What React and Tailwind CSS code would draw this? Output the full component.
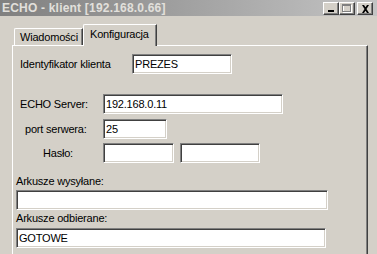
import React from 'react'

const sunken =
    'border border-t-[#808080] border-l-[#808080] border-b-white border-r-white shadow-[inset_1px_1px_0_#404040,inset_-1px_-1px_0_#d4d0c8] bg-white'

const Field = ({ w, h = 'h-[20px]', value = '' }) => (
    <div className={`${sunken} ${w} ${h} flex items-center pl-[2px] text-[11px] tracking-[-0.2px] text-black leading-none`}>
        {value}
    </div>
)

const CapButton = ({ children, className = '' }) => (
    <div className={`w-[16px] h-[13px] bg-[#d4d0c8] border border-t-white border-l-white border-b-[#404040] border-r-[#404040] shadow-[inset_-1px_-1px_0_#808080] flex items-center justify-center ${className}`}>
        {children}
    </div>
)

const App = () => {
    return (
        <div className="w-[377px] h-[254px] bg-[#d4d0c8] overflow-hidden flex flex-col font-['Liberation_Sans',Arial,sans-serif] text-black">
            {/* title bar */}
            <div className="h-[16px] flex items-start bg-gradient-to-r from-[#808080] to-[#c4c4c4]">
                <div className="pl-[2px] h-[16px] flex items-center text-[12px] font-bold tracking-[0.2px] text-[#e2e0dc] leading-none">
                    ECHO - klient [192.168.0.66]
                </div>
                <div className="ml-auto mt-[2px] mr-[4px] flex">
                    <CapButton>
                        <svg width="8" height="9" viewBox="0 0 8 9">
                            <rect x="1" y="6" width="6" height="2" fill="#000" />
                        </svg>
                    </CapButton>
                    <CapButton>
                        <svg width="10" height="9" viewBox="0 0 10 9">
                            <rect x="1.5" y="1.5" width="8" height="7" fill="none" stroke="#ffffff" />
                            <rect x="0.5" y="0.5" width="8" height="7" fill="none" stroke="#808080" />
                            <rect x="0" y="1" width="9" height="1" fill="#808080" />
                        </svg>
                    </CapButton>
                    <CapButton className="ml-[2px]">
                        <svg width="9" height="8" viewBox="0 0 9 8">
                            <path d="M1 0h2l1.5 2.2L6 0h2L5.5 4 8 8H6L4.5 5.8 3 8H1l2.5-4z" fill="#000" />
                        </svg>
                    </CapButton>
                </div>
            </div>

            {/* tabs */}
            <div className="mt-[8px] h-[21px] pl-[14px] flex items-end">
                <div className="w-[69px] h-[17px] border-t border-l border-white border-r border-r-[#404040] shadow-[inset_-1px_0_0_#808080] rounded-tl-[2px] pl-[5px] flex items-center text-[11px] tracking-[-0.2px] leading-none">
                    Wiadomości
                </div>
                <div className="relative z-10 w-[74px] h-[22px] -mb-px bg-[#d4d0c8] border-t border-l border-white border-r border-r-[#404040] shadow-[inset_-1px_0_0_#808080] rounded-tl-[2px] pl-[6px] pb-[3px] flex items-center text-[11px] tracking-[-0.2px] leading-none">
                    Konfiguracja
                </div>
            </div>

            {/* panel */}
            <div className="ml-[12px] w-[356px] flex-1 border-t border-l border-white border-r border-r-[#404040] shadow-[inset_-1px_0_0_#808080] flex flex-col text-[11px] tracking-[-0.2px] leading-[13px]">
                <div className="mt-[8px] flex items-center h-[20px]">
                    <div className="w-[119px] pl-[7px]">Identyfikator klienta</div>
                    <Field w="w-[100px]" value="PREZES" />
                </div>

                <div className="mt-[20px] flex items-center h-[20px]">
                    <div className="w-[90px] pl-[7px]">ECHO Server:</div>
                    <Field w="w-[180px]" value="192.168.0.11" />
                </div>

                <div className="mt-[5px] flex items-center h-[20px]">
                    <div className="w-[90px] pl-[12px]">port serwera:</div>
                    <Field w="w-[64px]" value="25" />
                </div>

                <div className="mt-[4px] flex items-center h-[20px]">
                    <div className="w-[90px] pl-[30px]">Hasło:</div>
                    <Field w="w-[71px]" />
                    <div className="w-[6px]" />
                    <Field w="w-[80px]" />
                </div>

                <div className="mt-[12px] pl-[3px]">Arkusze wysyłane:</div>
                <div className="mt-[2px] pl-[3px]">
                    <Field w="w-[312px]" />
                </div>

                <div className="mt-[2px] pl-[3px]">Arkusze odbierane:</div>
                <div className="mt-[3px] pl-[3px]">
                    <Field w="w-[310px]" value="GOTOWE" />
                </div>
            </div>
        </div>
    )
}

export default App
